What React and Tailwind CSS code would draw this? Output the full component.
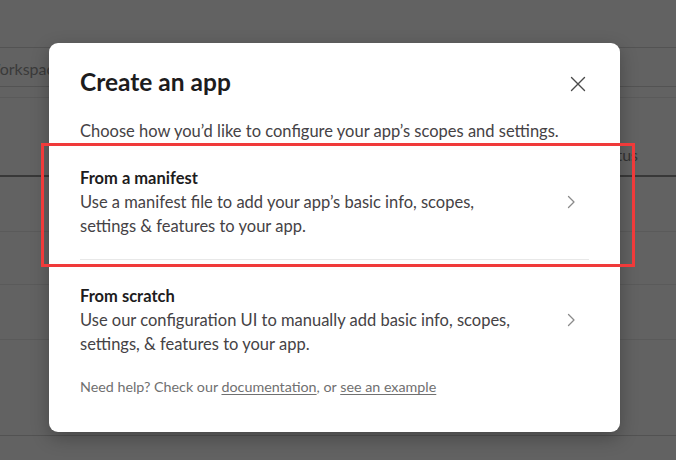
import React from 'react';

const Chevron = () => (
    <svg width="8" height="14" viewBox="0 0 8 14" fill="none" className="shrink-0">
        <path d="M1.5 1.5l5.5 5.5-5.5 5.5" stroke="#8a8a8a" strokeWidth="1.3" strokeLinecap="round" strokeLinejoin="round" />
    </svg>
);

function Option({ title, children, last }) {
    return (
        <div className={`flex items-center justify-between ${last ? 'pt-[24px]' : 'pt-[23px] pb-[21px] border-b border-[#e8e8e8]'}`}>
            <div className="text-[16.5px] leading-[24px]">
                <div className="font-bold text-[#1d1c1d]">{title}</div>
                <div className="text-[#454245]">{children}</div>
            </div>
            <div className="w-[22px] flex justify-center mr-[7px]">
                <Chevron />
            </div>
        </div>
    );
}

export default function App() {
    return (
        <div className="relative w-[676px] h-[460px] overflow-hidden bg-[#626262] font-['Lato',sans-serif]">
            {/* page behind the dimmed overlay */}
            <div className="h-[48px] border-b border-[#535353]" />
            <div className="h-[39px] flex items-center pt-[3px] border-b border-[#535353] text-[16px] text-[#3a3a3a]">
                <span className="-ml-[16px]">Workspace</span>
            </div>
            <div className="h-[11px] border-b border-[#5a5a5a]" />
            <div className="h-[79px] flex items-end justify-end pr-[38px] pb-[8px] border-b-2 border-[#383838] text-[16px] text-[#333]">
                <span>Status</span>
            </div>
            <div className="h-[55px] border-b border-[#5a5a5a]" />
            <div className="h-[53px] border-b border-[#5a5a5a]" />
            <div className="h-[55px] border-b border-[#5a5a5a]" />
            <div className="h-[96px] border-b border-[#525252]" />

            {/* modal */}
            <div className="absolute left-[49px] top-[43px] w-[571px] h-[389px] bg-white rounded-[9px] shadow-[0_6px_18px_rgba(0,0,0,0.28)] px-[31px] pt-[23px]">
                <div className="flex items-center justify-between h-[32px]">
                    <h2 className="text-[24.5px] leading-[32px] font-bold text-[#1d1c1d]">Create an app</h2>
                    <button className="w-[22px] h-[22px] flex items-center justify-center mt-[3px]">
                        <svg width="16" height="16" viewBox="0 0 16 16" fill="none">
                            <path d="M1.5 1.5l13 13M14.5 1.5l-13 13" stroke="#4a4a4a" strokeWidth="1.4" strokeLinecap="round" />
                        </svg>
                    </button>
                </div>
                <p className="mt-[21px] text-[16.5px] leading-[24px] text-[#454245]">
                    Choose how you’d like to configure your app’s scopes and settings.
                </p>
                <Option title="From a manifest">
                    Use a manifest file to add your app’s basic info, scopes,<br />
                    settings &amp; features to your app.
                </Option>
                <Option title="From scratch" last>
                    Use our configuration UI to manually add basic info, scopes,<br />
                    settings, &amp; features to your app.
                </Option>
                <p className="mt-[21px] text-[14.3px] leading-[20px] text-[#707070]">
                    Need help? Check our <span className="underline underline-offset-2">documentation</span>, or{' '}
                    <span className="underline underline-offset-2">see an example</span>
                </p>
            </div>

            {/* red highlight annotation */}
            <div className="absolute left-[41px] top-[143px] w-[594px] h-[124px] border-[3px] border-[#f03a3a]" />
        </div>
    );
}
